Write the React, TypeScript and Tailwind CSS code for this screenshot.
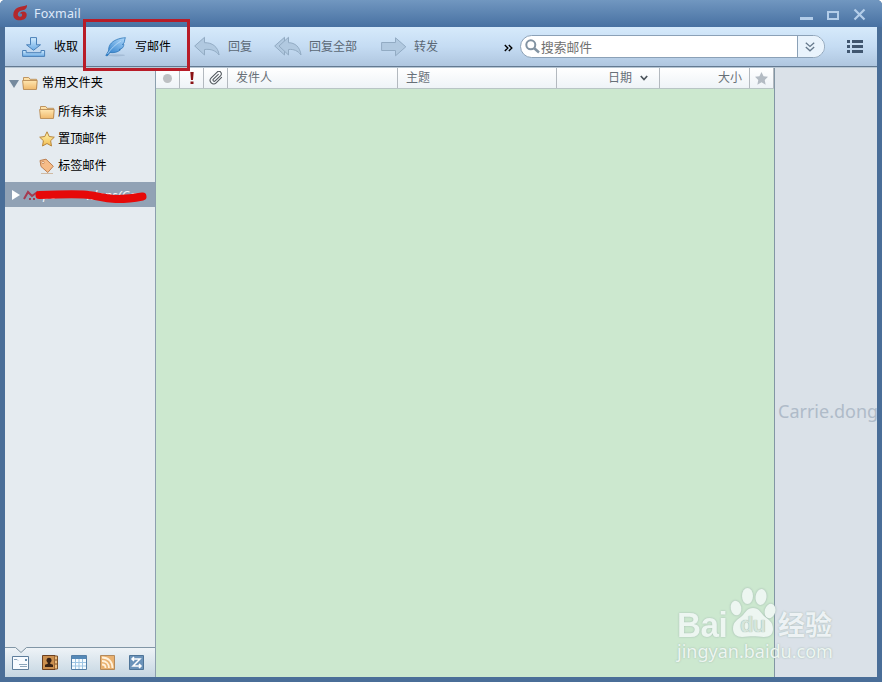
import type { ReactNode } from 'react';

const cjk = "font-['Noto_Sans','Noto_Sans_CJK_SC',sans-serif]";

function Gradients() {
  return (
    <svg className="absolute h-0 w-0" aria-hidden="true">
      <defs>
        <linearGradient id="blue" x1="0" y1="0" x2="0" y2="1">
          <stop offset="0" stopColor="#d3edff" />
          <stop offset="1" stopColor="#6aaae4" />
        </linearGradient>
        <linearGradient id="feather" x1="0.8" y1="0" x2="0.2" y2="1">
          <stop offset="0" stopColor="#a5d2f8" />
          <stop offset="1" stopColor="#2b7dca" />
        </linearGradient>
        <linearGradient id="folder" x1="0" y1="0" x2="0" y2="1">
          <stop offset="0" stopColor="#ffe6b0" />
          <stop offset="1" stopColor="#f0b96c" />
        </linearGradient>
        <linearGradient id="gold" x1="0" y1="0" x2="0" y2="1">
          <stop offset="0" stopColor="#fff6b4" />
          <stop offset="1" stopColor="#f2bd50" />
        </linearGradient>
      </defs>
    </svg>
  );
}

function FoxLogo() {
  return (
    <svg className="ml-[8px] mt-[5px] h-4 w-[15px] shrink-0" viewBox="0 0 15 16">
      <path d="M14 0C12 1.500 8 1.300 5 2.500 1.800 4 .3 6.500.3 9.800c0 3.600 2.200 5.500 6.200 5.500 4.800 0 7.200-2.200 7.200-5.500 0-2-1.200-3.300-3.500-3.300-1.500 0-2.700.8-3.700 2.200 1.500-.4 2.600 0 2.600 1.200 0 1.200-1 1.900-2.300 1.900-1.200 0-2-.8-2-2.200C4.800 7.200 6.500 5.900 9.500 5.300c3-.6 4.800-2.200 4.500-5.300z" fill="#b3282c" />
    </svg>
  );
}

function ReceiveIcon() {
  return (
    <svg className="h-5 w-6" viewBox="0 0 24 20" stroke="#4a80b8" fill="url(#blue)">
      <path d="M8.500.6h6v7.200h4l-7 5.500-7-5.500h4z" />
      <path d="M.6 13.500h3.600v2.200h14.800v-2.200h3.600v5.900H.6z" />
    </svg>
  );
}

function FeatherIcon() {
  return (
    <svg className="h-5 w-[22px]" viewBox="0 0 22 20">
      <ellipse cx="11" cy="18.300" rx="9" ry="1.100" fill="#819cb8" opacity=".4" />
      <path d="M20.500.7C14.500 1 8 3.200 5.200 7.500 3.600 10 3.700 12 3.500 14L.8 18.500l1.400.4L5 15.500c4 .6 8-.4 10.500-2.800l-1.500-.1 3.300-1.500c1.500-1.800 1.500-3 1.500-3.800l-1.500.2 1.800-1.700c.7-2 .4-3.800 1.400-5.100z" fill="url(#feather)" stroke="#2f77b9" strokeWidth=".8" />
      <path d="M2.500 17C6 11.500 10.500 7.300 16 4" fill="none" stroke="#c5e3fb" strokeWidth=".7" />
    </svg>
  );
}

function ReplyIcon() {
  return (
    <svg className="h-[21px] w-[26px]" viewBox="0 0 26 21" fill="#b1c9e0" stroke="#92abc3">
      <path d="M.7 10L10.500 1.300v5.400c7.500-.2 13.500 3.800 14.600 12.300-3.600-4.500-8-6.200-14.600-5.500v5.500z" />
    </svg>
  );
}

function ReplyAllIcon() {
  return (
    <svg className="h-[21px] w-7" viewBox="0 0 28 21" fill="#b1c9e0" stroke="#92abc3">
      <path d="M.7 10L10.500 1.300v17.700z" />
      <path d="M5 10l9.500-8.700v5.400c6.500 0 11.500 4.200 12.500 12.300-3.300-4.300-7-6-12.500-5.500v5.500z" />
    </svg>
  );
}

function ForwardIcon() {
  return (
    <svg className="h-5 w-[26px]" viewBox="0 0 26 20" fill="#b1c9e0" stroke="#92abc3">
      <path d="M.6 5.500h13.900V.8l10.300 9-10.300 9v-5.300H.6z" />
    </svg>
  );
}

function FolderIcon() {
  return (
    <svg className="h-[15px] w-4 shrink-0" viewBox="0 0 16 15" fill="url(#folder)" stroke="#b98b55" strokeWidth=".9">
      <path d="M1.500 12.500V1.500h5.200l1.400 1.800h6.500v9.200z" />
      <path d="M.6 4.500h14.600l-.8 9H1.500z" />
    </svg>
  );
}

function StarIcon() {
  return (
    <svg className="h-4 w-4 shrink-0" viewBox="0 0 16 16">
      <path d="M8 .8l2.200 4.700 5.100.7-3.700 3.500.9 5.300L8 12.500 3.500 15l.9-5.300L.7 6.200l5.100-.7z" fill="url(#gold)" stroke="#b8863c" />
    </svg>
  );
}

function TagIcon() {
  return (
    <svg className="h-[17px] w-4 shrink-0" viewBox="0 0 16 17">
      <path d="M2 15.500h12" stroke="#c5a582" strokeWidth=".7" />
      <path d="M1 2.500l6-1.300 7.300 7-5.500 6.300L2 8.500z" fill="#f6bc88" stroke="#bc7f50" />
      <circle cx="4" cy="4.500" r="1.200" fill="#fff2df" stroke="#bc7947" strokeWidth=".7" />
    </svg>
  );
}

function Tool({ className, label, gap, children }: { className: string; label: string; gap: string; children: ReactNode }) {
  return (
    <div className={`flex shrink-0 items-center whitespace-nowrap ${gap} ${className}`}>
      {children}
      <span>{label}</span>
    </div>
  );
}

function TitleBar() {
  return (
    <header className="flex h-[27px] shrink-0 bg-linear-to-b from-[#7197c0] to-[#4871a2] px-[5px]">
      <FoxLogo />
      <span className="ml-[6px] mt-[5px] font-['Noto_Sans',sans-serif] text-[12.5px] leading-[18px] tracking-[0.2px] text-[#dfeafa]">Foxmail</span>
      <svg className="ml-auto mr-[11px] mt-[8px] h-[13px] w-[67px]" viewBox="0 0 67 13" fill="none" stroke="#b3cde9">
        <path d="M1 10.500h13" strokeWidth="3" />
        <path d="M29 4h10v7H29z" strokeWidth="2" />
        <path d="M55.500 1.500l10 10m0-10l-10 10" strokeWidth="2.200" />
      </svg>
    </header>
  );
}

function Toolbar() {
  return (
    <div className="flex h-10 shrink-0 items-center border-b border-[#637991] bg-linear-to-b from-[#d6eafb] via-[#c5dcf3] to-[#afc6df] text-[12px] leading-[18px] text-[#5b6875]">
      <Tool className="ml-[17px] w-[83px] text-black" gap="gap-2" label="收取"><ReceiveIcon /></Tool>
      <Tool className="w-[89px] text-black" gap="gap-2" label="写邮件"><FeatherIcon /></Tool>
      <Tool className="w-[80px]" gap="gap-2" label="回复"><ReplyIcon /></Tool>
      <Tool className="w-[107px]" gap="gap-[7px]" label="回复全部"><ReplyAllIcon /></Tool>
      <Tool className="w-[123px]" gap="gap-[7px]" label="转发"><ForwardIcon /></Tool>
      <svg className="mt-[2px] h-2 w-[9px] shrink-0" viewBox="0 0 9 8" fill="none" stroke="black" strokeWidth="1.4">
        <path d="M.8 1l3 3-3 3M4.800 1l3 3-3 3" />
      </svg>
      <div className="ml-[7px] flex h-[23px] w-[305px] shrink-0 items-center overflow-hidden rounded-full border border-[#8ba1b7] bg-white">
        <svg className="ml-1 h-[15px] w-[15px]" viewBox="0 0 15 15" fill="none" stroke="#8293a2">
          <circle cx="5.800" cy="5.800" r="4.500" strokeWidth="2" />
          <path d="M9 9l5 4.500" strokeWidth="2.500" />
        </svg>
        <span className="ml-px mt-px text-[12.75px] text-[#707070]">搜索邮件</span>
        <div className="ml-auto flex h-full w-[27px] items-center justify-center border-l border-[#8ba1b7] bg-[#e9f3fc]">
          <svg className="mr-[3px] h-[10px] w-[10px]" viewBox="0 0 10 10" fill="none" stroke="#65788b" strokeWidth="1.300">
            <path d="M.8.8L5 4.500 9.200.8M.8 5L5 8.800 9.200 5" />
          </svg>
        </div>
      </div>
      <svg className="ml-[22px] h-[13px] w-4 shrink-0" viewBox="0 0 16 13" fill="#405670">
        <path d="M0 0h3v3H0zM5 0h11v3H5zM0 5h3v3H0zM5 5h11v3H5zM0 10h3v3H0zM5 10h11v3H5z" />
      </svg>
    </div>
  );
}

function Sidebar() {
  return (
    <aside className="flex w-[151px] shrink-0 flex-col border-r border-[#8c9fae] bg-[#e5ebf0] text-[12.2px] leading-[18px] text-black">
      <div className="flex h-[30px] items-center pl-1">
        <svg className="mr-[3px] mt-px h-2 w-[10px]" viewBox="0 0 10 8"><path d="M0 0h10L5 8z" fill="#758a9e" /></svg>
        <FolderIcon />
        <span className="ml-1">常用文件夹</span>
      </div>
      <div className="flex h-[27px] items-center gap-[3px] pl-[34px] pt-px"><FolderIcon />所有未读</div>
      <div className="flex h-[27px] items-center gap-[3px] pl-[34px] pt-px"><StarIcon />置顶邮件</div>
      <div className="mb-[3px] flex h-[27px] items-center gap-[3px] pl-[34px] pt-px"><TagIcon />标签邮件</div>
      <div className="relative flex h-[25px] shrink-0 items-center overflow-hidden bg-[#91a2b5] pl-[7px]">
        <svg className="h-[10px] w-[8px]" viewBox="0 0 8 10"><path d="M0 0l8 5-8 5z" fill="white" /></svg>
        <span className="ml-[23px] font-['Noto_Sans',sans-serif] text-[12px] italic text-[#f4f6f9]">pc</span>
        <span className="ml-[31px] font-['Noto_Sans',sans-serif] text-[13px] italic text-[#f4f6f9]">idons(Ca</span>
        <svg className="absolute inset-0 h-[25px] w-[150px]" viewBox="0 0 150 25" fill="none">
          <path d="M19 17l4-7 4 4 6-4.500M24 17h2m2 0h2" stroke="#a53b50" strokeWidth="2" />
          <path d="M34.500 13c14-.5 29-1 44-.5 12 .5 18 4 32 4.500 12 .3 19-1 27-2.500" stroke="#e60909" strokeWidth="8" strokeLinecap="round" />
        </svg>
      </div>
      <div className="relative mt-auto flex h-[30px] items-center border-t border-[#8196a6] bg-linear-to-b from-[#eef3f7] to-[#c5d6e2] pl-[7px]">
        <svg className="absolute -top-px left-[9px] h-[7px] w-[14px]" viewBox="0 0 14 7">
          <path d="M1 0h12L7 5.500z" fill="#e5ebf0" />
          <path d="M1.500.5L7 5.500l5.500-5" fill="none" stroke="#7c919f" />
        </svg>
        <svg className="h-[14px] w-[17px]" viewBox="0 0 17 14">
          <path d="M.5.5h16v13H.5z" fill="#f7fbff" stroke="#5e7e9c" />
          <path d="M2 3.500h3l1 1M7 8.500h8M8 10.500h7" fill="none" stroke="#8ba5bb" /><path d="M13 3h2v2h-2z" fill="#638cac" />
        </svg>
        <svg className="ml-[13px] h-[15px] w-4" viewBox="0 0 16 15">
          <path d="M.5.500h12.500v14H.5z" fill="#cc904f" stroke="#6c4021" />
          <path d="M13 1h2.500v13H13M13 5h2m-2 4h2" fill="#efbd7c" stroke="#7d5028" />
          <circle cx="7" cy="5.300" r="2.500" fill="#392315" />
          <path d="M5.800 7h2.400v1.800l2.800 1V12H3V9.800l2.800-1z" fill="#392315" />
        </svg>
        <svg className="ml-[13px] h-[15px] w-4" viewBox="0 0 16 15">
          <path d="M.5.500h15v14H.5z" fill="#f7fcff" stroke="#547fa7" /><path d="M1 1h14v3H1z" fill="#5489b8" />
          <path d="M1 7.500h14M1 11h14M4.500 4v10M8 4v10M11.500 4v10" stroke="#9dc5e4" />
        </svg>
        <svg className="ml-[13px] h-[15px] w-[15px]" viewBox="0 0 15 15">
          <path d="M.5.500h14v14H.5z" fill="#e9b170" stroke="#b38a5d" />
          <path d="M2 2.500c6.500 0 10.500 4 10.500 10.500M2 6c4 0 7 2.500 7 7M2 9.500c2.500 0 3.500 1 3.500 3.500" fill="none" stroke="#fff1db" strokeWidth="1.800" />
        </svg>
        <svg className="ml-[14px] h-[15px] w-[15px]" viewBox="0 0 15 15">
          <path d="M.5.500h14v14H.5z" fill="#6b93ba" stroke="#4e7498" />
          <path d="M5 2L3 4l2 2M3 4h8L4 11h8M10 9l2 2-2 2" fill="none" stroke="white" strokeWidth="1.500" />
        </svg>
      </div>
    </aside>
  );
}

function MessageList() {
  const cell = 'flex h-full shrink-0 items-center border-r border-[#b3b9bf]';
  return (
    <section className="flex w-[619px] shrink-0 flex-col border-r border-[#8296a4] bg-[#cce8cf]">
      <div className="flex h-[21px] items-center border-b border-[#b8c5c5] bg-linear-to-b from-white to-[#eef3f7] text-[12px] leading-[18px] text-[#687078]">
        <div className={`${cell} w-6 justify-center`}><i className="h-[9px] w-[9px] rounded-full bg-[#bdc0c3]" /></div>
        <div className={`${cell} w-6 justify-center`}>
          <svg className="h-3 w-1" viewBox="0 0 4 12" fill="#8a1215"><path d="M.3 0h3.400L3 8H1zM.5 9.500h3V12h-3z" /></svg>
        </div>
        <div className={`${cell} w-6 justify-center`}>
          <svg className="h-[14px] w-[14px]" viewBox="0 0 24 24" fill="none" stroke="#50565c" strokeWidth="1.800" strokeLinecap="round">
            <path d="M21.500 11l-9.200 9.200a6 6 0 0 1-8.500-8.500L14 1.800a4.200 4.200 0 0 1 6 6L10.500 17a2 2 0 0 1-3-3l8.500-8.400" />
          </svg>
        </div>
        <div className={`${cell} w-[170px] pl-2`}>发件人</div>
        <div className={`${cell} w-[159px] pl-2`}>主题</div>
        <div className={`${cell} w-[103px] justify-end pr-[11px]`}>日期
          <svg className="ml-2 h-[6px] w-2" viewBox="0 0 8 6" fill="none" stroke="#4c545b" strokeWidth="1.700"><path d="M.8 1L4 4.500 7.200 1" /></svg>
        </div>
        <div className={`${cell} w-[90px] justify-end pr-[7px]`}>大小</div>
        <div className={`${cell} w-6 justify-center`}>
          <svg className="h-[13px] w-[13px]" viewBox="0 0 12 12"><path d="M6 0l1.900 3.900 4.100.5-3 3 .8 4.300L6 9.500l-3.800 2.200.8-4.300-3-3 4.100-.5z" fill="#b3bbc3" /></svg>
        </div>
      </div>
    </section>
  );
}

function Watermark() {
  return (
    <div className="absolute left-[677px] top-[585px] h-[80px] w-[160px] text-[#edf6f1] [text-shadow:0_0_2px_#9db3ac]">
      <svg className="absolute left-[51px] top-[1px] h-[53px] w-[50px] drop-shadow-[0_0_1px_#9fb5ae]" viewBox="0 0 50 53" fill="#edf6f1">
        <ellipse cx="8" cy="22" rx="5.3" ry="7.3" transform="rotate(-10 8 22)" />
        <ellipse cx="19.5" cy="10" rx="5.500" ry="8" />
        <ellipse cx="33" cy="11" rx="5.500" ry="8" transform="rotate(8 33 11)" />
        <ellipse cx="42" cy="25" rx="5.300" ry="7.300" transform="rotate(16 42 25)" />
        <path d="M25 22c-6 0-7 4-11 8-5 4-9 6-9 13 0 5 4 8 9 8 4 0 8-.7 11-.7s7 .7 11 .7c6 0 9-3 9-8 0-7-4-9-9-13-4-4-5-8-11-8z" />
      </svg>
      <div className="flex h-[52px] items-end leading-none">
        <span className="w-[53px] shrink-0 origin-left scale-x-[0.95] font-['Liberation_Sans',sans-serif] text-[35px] font-bold leading-[24px] tracking-[-0.5px]">Bai</span>
        <span className="relative ml-[10px] w-[38px] shrink-0 font-['Liberation_Sans',sans-serif] text-[22px] font-bold leading-[24px] tracking-[-1px] text-[#d5e5dc] [text-shadow:0_0_1px_#839c91]">du</span>
        <span className="shrink-0 font-['Noto_Sans_CJK_SC',sans-serif] text-[27px] font-bold leading-[27px] text-[#edf2f4]">经验</span>
      </div>
      <span className="mt-[2px] block font-['Noto_Sans',sans-serif] text-[18px] leading-6">jingyan.baidu.com</span>
    </div>
  );
}

export default function App() {
  return (
    <div className={`relative flex h-[682px] w-[882px] flex-col overflow-hidden rounded-t-[5px] bg-[#4a6e98] ${cjk}`}>
      <Gradients />
      <TitleBar />
      <main className="mx-[5px] flex h-[650px] shrink-0 flex-col">
        <Toolbar />
        <div className="flex min-h-0 flex-1 border-t border-[#b8c7d3]">
          <Sidebar />
          <MessageList />
          <aside className="flex min-w-0 flex-1 overflow-hidden bg-[#dae1e8] pl-[3px] pt-[331px] font-['Noto_Sans',sans-serif] text-[18px] leading-6 text-[#afbbc8]">Carrie.dong</aside>
        </div>
      </main>
      <div className="absolute left-[83px] top-[19px] h-[52px] w-[107px] border-[3px] border-[#b81c28]" />
      <Watermark />
    </div>
  );
}
